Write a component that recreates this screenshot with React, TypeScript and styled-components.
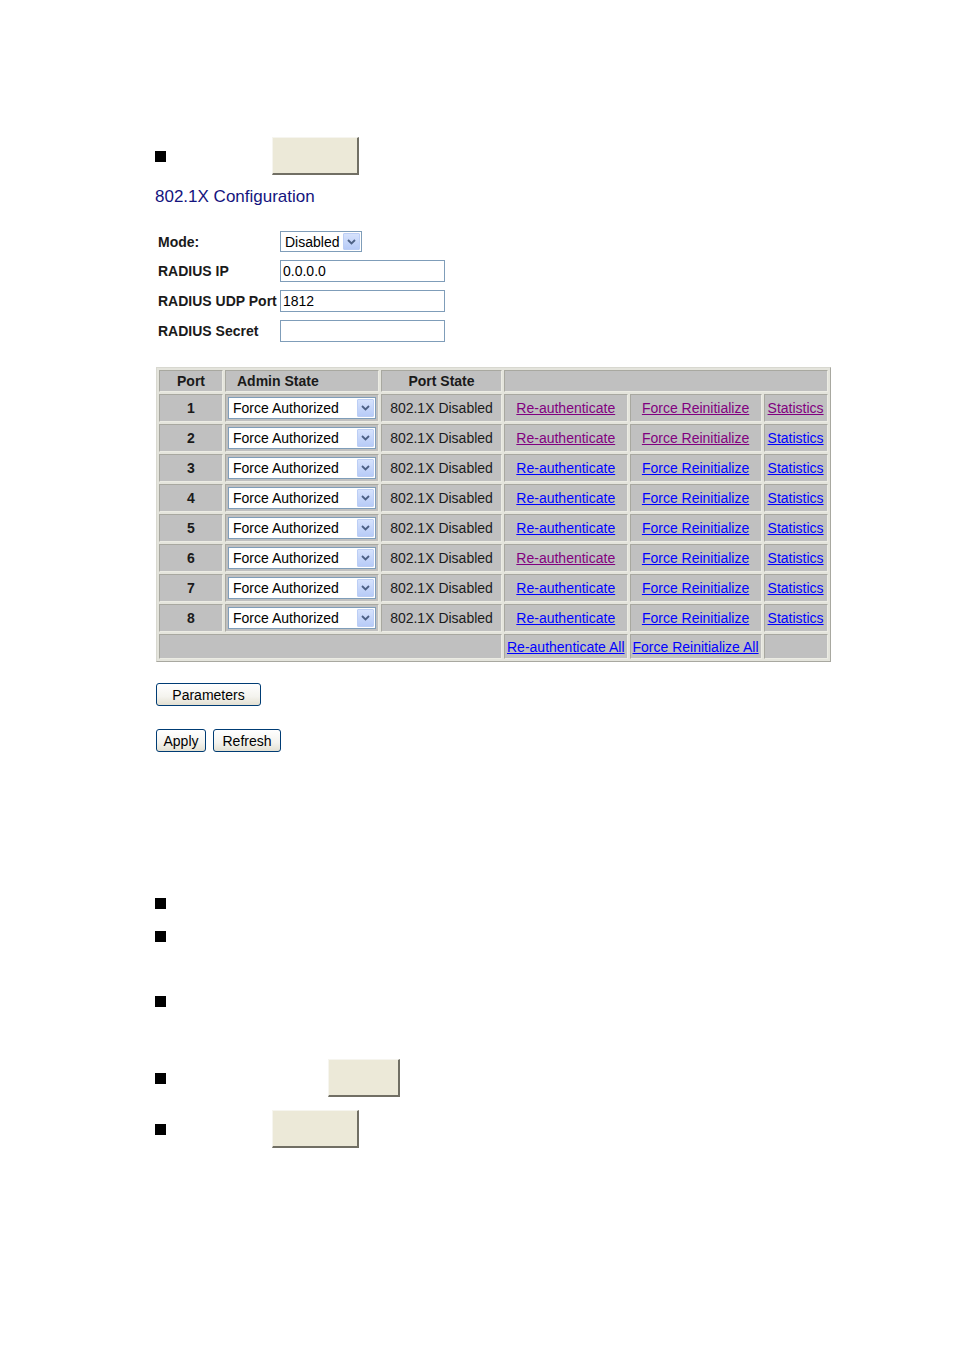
import styled, { createGlobalStyle } from "styled-components";

const GlobalStyle = createGlobalStyle`
  body {
    margin: 0;
    background: #ffffff;
    font-family: "Liberation Sans", Arial, sans-serif;
  }
`;

const Page = styled.div`
  padding: 137px 0 200px 155px;
  width: 954px;
  box-sizing: border-box;
`;

const BulletRow = styled.div<{ $top?: number; $boxLeft?: number }>`
  display: flex;
  align-items: center;
  margin-top: ${(p) => p.$top ?? 0}px;
  gap: ${(p) => p.$boxLeft ?? 0}px;
`;

const Bullet = styled.span`
  display: block;
  width: 11px;
  height: 11px;
  background: #000;
  flex: none;
`;

const BeigeBox = styled.div<{ $w: number }>`
  width: ${(p) => p.$w}px;
  height: 35px;
  background: #ece9d8;
  border-top: 1px solid #f6f5ef;
  border-left: 1px solid #f6f5ef;
  border-right: 2px solid #716f64;
  border-bottom: 2px solid #716f64;
`;

const Title = styled.h2`
  margin: 12px 0 0 0;
  font-size: 17px;
  line-height: 20px;
  font-weight: normal;
  color: #14147e;
`;

const FormGrid = styled.div`
  display: grid;
  grid-template-columns: 122px 166px;
  row-gap: 8px;
  align-items: center;
  margin: 24px 0 0 3px;
`;

const Label = styled.span`
  font-size: 14px;
  font-weight: bold;
  color: #1a1a1a;
  white-space: nowrap;
`;

const TextBox = styled.div`
  width: 165px;
  height: 22px;
  box-sizing: border-box;
  border: 1px solid #7f9db9;
  background: #fff;
  font-size: 14px;
  line-height: 20px;
  padding-left: 2px;
  color: #000;
`;

const SelectBox = styled.div<{ $w: number; $h?: number }>`
  display: flex;
  align-items: stretch;
  width: ${(p) => p.$w}px;
  height: ${(p) => p.$h ?? 22}px;
  box-sizing: border-box;
  border: 1px solid #7f9db9;
  background: #fff;
  font-size: 14px;
  font-weight: normal;
  color: #000;
  text-align: left;
`;

const SelectText = styled.span`
  flex: 1;
  display: flex;
  align-items: center;
  padding-left: 4px;
  white-space: nowrap;
  overflow: hidden;
`;

const SelectArrow = styled.span`
  width: 15px;
  margin: 1px;
  display: flex;
  align-items: center;
  justify-content: center;
  background: linear-gradient(#d6e2fc, #b7cbf7);
  border: 1px solid #bccef5;
  border-radius: 1px;
`;

const Grid = styled.table`
  margin-top: 25px;
  margin-left: 1px;
  border-collapse: separate;
  border-spacing: 2px;
  background: #e4e4dc;
  border: 1px solid;
  border-color: #d8d8d0 #a8a8a0 #a8a8a0 #d8d8d0;
`;

const HeadCell = styled.th<{ $align?: string; $pad?: number }>`
  background: #c0c0c0;
  height: 20px;
  padding: 0 0 0 ${(p) => p.$pad ?? 0}px;
  text-align: ${(p) => p.$align ?? "center"};
  font-size: 14px;
  font-weight: bold;
  color: #1a1a1a;
  border: 1px solid;
  border-color: #a8a8a0 #ececE4 #ececE4 #a8a8a0;
`;

const Cell = styled.td<{ $w?: number; $bold?: boolean; $h?: number }>`
  background: #c0c0c0;
  width: ${(p) => (p.$w ? `${p.$w}px` : "auto")};
  height: ${(p) => p.$h ?? 26}px;
  padding: 0 2px;
  text-align: center;
  font-size: 14px;
  font-weight: ${(p) => (p.$bold ? "bold" : "normal")};
  color: #1a1a1a;
  white-space: nowrap;
  border: 1px solid;
  border-color: #a8a8a0 #ececE4 #ececE4 #a8a8a0;
`;

const Link = styled.a<{ $visited?: boolean }>`
  color: ${(p) => (p.$visited ? "#800080" : "#0000ff")};
  text-decoration: underline;
  font-size: 14px;
  cursor: pointer;
`;

const XpButton = styled.button<{ $w: number }>`
  width: ${(p) => p.$w}px;
  height: 23px;
  padding: 0;
  border: 1px solid #003c74;
  border-radius: 3px;
  background: linear-gradient(#ffffff, #f4f3ee 60%, #e3e0d2);
  font-family: "Liberation Sans", Arial, sans-serif;
  font-size: 14px;
  color: #000;
  cursor: pointer;
`;

const ButtonRow = styled.div<{ $top: number }>`
  display: flex;
  gap: 7px;
  margin-top: ${(p) => p.$top}px;
  margin-left: 1px;
`;

function Chevron() {
  return (
    <svg width="9" height="6" viewBox="0 0 9 6">
      <path d="M1 1 L4.5 4.5 L8 1" stroke="#4d6185" strokeWidth="1.8" fill="none" />
    </svg>
  );
}

function Select({ value, width, height }: { value: string; width: number; height?: number }) {
  return (
    <SelectBox $w={width} $h={height}>
      <SelectText>{value}</SelectText>
      <SelectArrow>
        <Chevron />
      </SelectArrow>
    </SelectBox>
  );
}

const ports = [
  { id: 1, re: true, force: true, stats: true },
  { id: 2, re: true, force: true, stats: false },
  { id: 3, re: false, force: false, stats: false },
  { id: 4, re: false, force: false, stats: false },
  { id: 5, re: false, force: false, stats: false },
  { id: 6, re: true, force: false, stats: false },
  { id: 7, re: false, force: false, stats: false },
  { id: 8, re: false, force: false, stats: false },
];

export default function App() {
  return (
    <Page>
      <GlobalStyle />
      <BulletRow $boxLeft={106}>
        <Bullet />
        <BeigeBox $w={84} />
      </BulletRow>
      <Title>802.1X Configuration</Title>

      <FormGrid>
        <Label>Mode:</Label>
        <Select value="Disabled" width={82} height={21} />
        <Label>RADIUS IP</Label>
        <TextBox>0.0.0.0</TextBox>
        <Label>RADIUS UDP Port</Label>
        <TextBox>1812</TextBox>
        <Label>RADIUS Secret</Label>
        <TextBox />
      </FormGrid>

      <Grid>
        <thead>
          <tr>
            <HeadCell>Port</HeadCell>
            <HeadCell $align="left" $pad={11}>
              Admin State
            </HeadCell>
            <HeadCell>Port State</HeadCell>
            <HeadCell colSpan={3} />
          </tr>
        </thead>
        <tbody>
          {ports.map((p) => (
            <tr key={p.id}>
              <Cell $w={58} $bold>
                {p.id}
              </Cell>
              <Cell $w={148}>
                <Select value="Force Authorized" width={148} />
              </Cell>
              <Cell $w={115}>802.1X Disabled</Cell>
              <Cell $w={116}>
                <Link $visited={p.re}>Re-authenticate</Link>
              </Cell>
              <Cell $w={126}>
                <Link $visited={p.force}>Force Reinitialize</Link>
              </Cell>
              <Cell $w={58}>
                <Link $visited={p.stats}>Statistics</Link>
              </Cell>
            </tr>
          ))}
          <tr>
            <Cell colSpan={3} $h={23} />
            <Cell $h={23}>
              <Link>Re-authenticate All</Link>
            </Cell>
            <Cell $h={23}>
              <Link>Force Reinitialize All</Link>
            </Cell>
            <Cell $h={23} />
          </tr>
        </tbody>
      </Grid>

      <ButtonRow $top={21}>
        <XpButton $w={105}>Parameters</XpButton>
      </ButtonRow>
      <ButtonRow $top={23}>
        <XpButton $w={50}>Apply</XpButton>
        <XpButton $w={68}>Refresh</XpButton>
      </ButtonRow>

      <BulletRow $top={146}>
        <Bullet />
      </BulletRow>
      <BulletRow $top={22}>
        <Bullet />
      </BulletRow>
      <BulletRow $top={54}>
        <Bullet />
      </BulletRow>
      <BulletRow $top={52} $boxLeft={162}>
        <Bullet />
        <BeigeBox $w={69} />
      </BulletRow>
      <BulletRow $top={13} $boxLeft={106}>
        <Bullet />
        <BeigeBox $w={84} />
      </BulletRow>
    </Page>
  );
}
